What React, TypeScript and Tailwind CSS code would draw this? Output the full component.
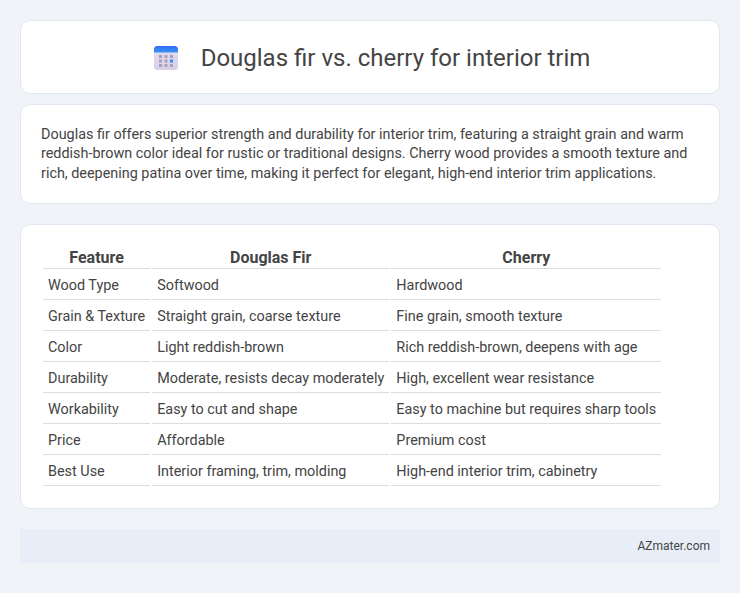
export default function App() {
  const rows = [
    ["Wood Type", "Softwood", "Hardwood"],
    ["Grain & Texture", "Straight grain, coarse texture", "Fine grain, smooth texture"],
    ["Color", "Light reddish-brown", "Rich reddish-brown, deepens with age"],
    ["Durability", "Moderate, resists decay moderately", "High, excellent wear resistance"],
    ["Workability", "Easy to cut and shape", "Easy to machine but requires sharp tools"],
    ["Price", "Affordable", "Premium cost"],
    ["Best Use", "Interior framing, trim, molding", "High-end interior trim, cabinetry"],
  ];
  return (
    <div className="min-h-[593px] bg-[#f0f3f8] px-5 pt-5 font-['Roboto',sans-serif] text-[#444444]">
      <div className="flex h-[74px] items-center justify-center rounded-[10px] border border-[#e2e6f0] bg-white pt-[1px] pl-1">
        <svg width="24" height="24" viewBox="0 0 24 24" className="mr-[23px]">
          <defs>
            <linearGradient id="top" x1="0" y1="0" x2="0" y2="1">
              <stop offset="0" stopColor="#2f6ff0" />
              <stop offset="1" stopColor="#3a93f8" />
            </linearGradient>
            <linearGradient id="body" x1="0" y1="0" x2="0" y2="1">
              <stop offset="0" stopColor="#e6deef" />
              <stop offset="1" stopColor="#d8cfe8" />
            </linearGradient>
          </defs>
          <rect x="0" y="0" width="24" height="24" rx="3.5" fill="url(#body)" />
          <path d="M0 6.5V3.5A3.5 3.5 0 0 1 3.5 0h17A3.5 3.5 0 0 1 24 3.5V6.5Z" fill="url(#top)" />
          {[9, 13.5, 18].map((y) =>
            [5, 10.5, 16].map((x) => (
              <rect key={`${x}-${y}`} x={x} y={y} width="3" height="3" fill={x === 16 && y === 13.5 ? "#2f8df5" : "#a8a2b8"} />
            ))
          )}
        </svg>
        <h1 className="text-2xl leading-normal font-normal">Douglas fir vs. cherry for interior trim</h1>
      </div>

      <div className="mt-2.5 h-[100px] rounded-[10px] border border-[#e2e6f0] bg-white px-5 pt-5 text-[14.4px] leading-[1.35]">
        Douglas fir offers superior strength and durability for interior trim, featuring a straight grain and warm reddish-brown color ideal for rustic or traditional designs. Cherry wood provides a smooth texture and rich, deepening patina over time, making it perfect for elegant, high-end interior trim applications.
      </div>

      <div className="mt-5 h-[285px] rounded-[10px] border border-[#e2e6f0] bg-white px-5 pt-[18px]">
        <table className="border-separate border-spacing-[2px] text-[14.4px]">
          <thead>
            <tr>
              {["Feature", "Douglas Fir", "Cherry"].map((h) => (
                <th key={h} className="border-b border-[#dddddd] px-[5px] pt-[3px] pb-[1px] text-center text-[16px] leading-[19px] font-bold">{h}</th>
              ))}
            </tr>
          </thead>
          <tbody>
            {rows.map((r) => (
              <tr key={r[0]}>
                {r.map((c) => (
                  <td key={c} className="h-[29px] border-b border-[#dddddd] px-[5px] py-0 text-left leading-[19px]">{c}</td>
                ))}
              </tr>
            ))}
          </tbody>
        </table>
      </div>

      <div className="mt-5 flex h-[34px] items-center justify-end bg-[#e8eef8] px-2.5 text-xs">AZmater.com</div>
    </div>
  );
}
